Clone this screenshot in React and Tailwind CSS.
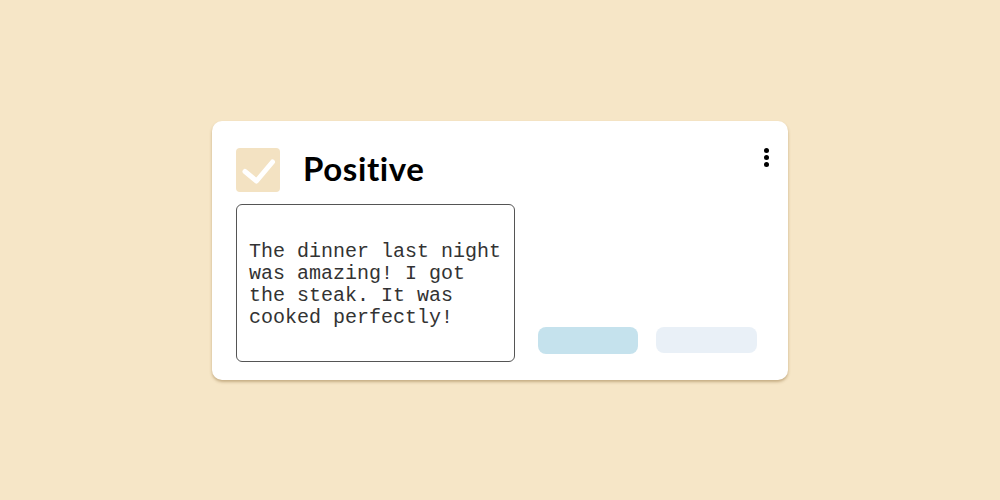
export default function App() {
  return (
    <div className="w-full h-[500px] bg-[#f6e6c7] flex items-center justify-center">
      <div className="w-[576px] h-[259px] bg-white rounded-[10px] shadow-[0_2px_3px_rgba(140,105,50,0.45)] flex flex-col pl-6 pr-[18px] pt-[27px] pb-[18px]">
        <div className="flex justify-between items-start h-11">
          <div className="flex items-center gap-[23px]">
            <div className="w-11 h-11 rounded-[4px] bg-[#f3e2c2] flex items-center justify-center">
              <svg width="44" height="44" viewBox="0 0 44 44" fill="none">
                <path d="M9 23.5L20.5 33L36.5 14" stroke="white" strokeWidth="5" strokeLinecap="round" strokeLinejoin="round" />
              </svg>
            </div>
            <h1 className="text-[33px] leading-none font-bold text-black tracking-[0.6px] font-['Lato',sans-serif] -mt-[2px]">Positive</h1>
          </div>
          <div className="flex flex-col gap-[2px] pr-[1px]">
            <span className="w-[5px] h-[5px] rounded-full bg-black" />
            <span className="w-[5px] h-[5px] rounded-full bg-black" />
            <span className="w-[5px] h-[5px] rounded-full bg-black" />
          </div>
        </div>
        <div className="flex items-end gap-[23px] mt-3">
          <div className="w-[279px] h-[158px] border border-[#555] rounded-[6px] flex items-center pl-3 pr-2 pt-1">
            <p className="font-['Liberation_Mono',monospace] text-[20px] leading-[22px] text-[#333]">
              The dinner last night
              <br />
              was amazing! I got
              <br />
              the steak. It was
              <br />
              cooked perfectly!
            </p>
          </div>
          <div className="flex gap-[18px] mb-2">
            <div className="w-[100px] h-[27px] rounded-lg bg-[#c5e2ed]" />
            <div className="w-[101px] h-[26px] rounded-lg bg-[#e9f0f7]" />
          </div>
        </div>
      </div>
    </div>
  );
}
